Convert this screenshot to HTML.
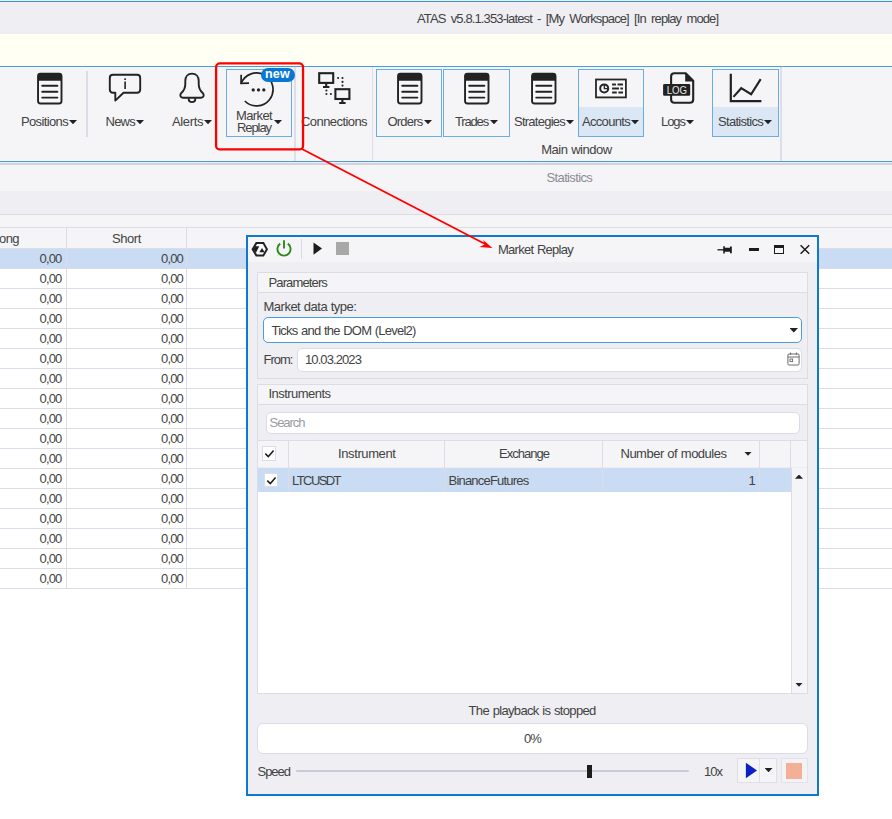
<!DOCTYPE html>
<html><head><meta charset="utf-8"><title>ATAS Market Replay</title>
<style>
*{box-sizing:border-box;margin:0;padding:0}
html,body{width:892px;height:819px;overflow:hidden;background:#fff}
body{position:relative;font-family:"Liberation Sans",sans-serif;font-size:13px;color:#424242;-webkit-font-smoothing:antialiased}
.abs{position:absolute}
.t{position:absolute;white-space:nowrap;line-height:16px;height:16px}
.hl{position:absolute;height:1px}
.vl{position:absolute;width:1px}
.box{position:absolute;border:1px solid #6aade3}
.arr{position:absolute;width:8px;height:4.2px;background:#222;clip-path:polygon(0 0,100% 0,50% 100%)}
</style></head><body>

<!-- main title bar -->
<div class="abs" style="left:0;top:0;width:892px;height:34px;background:#eeeef3"></div>
<div class="hl" style="left:0;top:1px;width:892px;background:#3b93d6"></div>
<div class="t" id="title" style="letter-spacing:-0.88px;word-spacing:2.48px;left:417px;top:11px">ATAS v5.8.1.353-latest - [My Workspace] [In replay mode]</div>

<!-- yellow strip -->
<div class="abs" style="left:0;top:34px;width:892px;height:32px;background:#fffff4"></div>

<!-- ribbon -->
<div class="abs" id="ribbon" style="left:0;top:66px;width:892px;height:97px;background:#f5f5f7"></div>
<div class="hl" style="left:0;top:66px;width:892px;background:#4a9cdb"></div>
<div class="hl" style="left:0;top:161px;width:892px;background:#4a9cdb"></div>
<div class="hl" style="left:0;top:162px;width:892px;height:1px;background:#eeeef4"></div>


<!-- ribbon separators -->
<div class="vl" style="left:86.3px;top:71px;height:66px;width:1.3px;background:#dcdce6"></div>
<div class="vl" style="left:294.3px;top:67px;height:94px;width:1.3px;background:#dedee8"></div>
<div class="vl" style="left:371.8px;top:67px;height:94px;width:1.3px;background:#dedee8"></div>
<div class="vl" style="left:780.4px;top:67px;height:94px;width:1.3px;background:#dedee8"></div>

<!-- button boxes -->
<div class="box" style="left:226px;top:69px;width:66px;height:68px"></div>
<div class="box" style="left:376px;top:69px;width:66px;height:68px"></div>
<div class="box" style="left:443px;top:69px;width:67px;height:68px"></div>
<div class="box" style="left:578px;top:69px;width:66px;height:68px"><div class="abs" style="left:0;top:37px;width:64px;height:29px;background:#dbe7f5"></div></div>
<div class="box" style="left:712px;top:69px;width:67px;height:68px"><div class="abs" style="left:0;top:37px;width:65px;height:29px;background:#dbe7f5"></div></div>

<!-- list icons: Positions, Orders, Trades, Strategies -->
<svg class="abs" style="left:37px;top:72px" width="26" height="33" viewBox="0 0 26 33"><rect x="0.1" y="0.8" width="25.35" height="31.6" rx="3.4" fill="#222"/><path d="M2 8.85 H23.55 V28.9 Q23.55 30.5 21.95 30.5 H3.6 Q2 30.5 2 28.9Z" fill="#f7f7f9"/><path d="M5.2 13.7H20.4M5.2 19.7H20.4M5.2 25.6H20.4" stroke="#222" stroke-width="1.9" stroke-linecap="round"/></svg>
<svg class="abs" style="left:397px;top:72px" width="26" height="33" viewBox="0 0 26 33"><rect x="0.1" y="0.8" width="25.35" height="31.6" rx="3.4" fill="#222"/><path d="M2 8.85 H23.55 V28.9 Q23.55 30.5 21.95 30.5 H3.6 Q2 30.5 2 28.9Z" fill="#f7f7f9"/><path d="M5.2 13.7H20.4M5.2 19.7H20.4M5.2 25.6H20.4" stroke="#222" stroke-width="1.9" stroke-linecap="round"/></svg>
<svg class="abs" style="left:464px;top:72px" width="26" height="33" viewBox="0 0 26 33"><rect x="0.1" y="0.8" width="25.35" height="31.6" rx="3.4" fill="#222"/><path d="M2 8.85 H23.55 V28.9 Q23.55 30.5 21.95 30.5 H3.6 Q2 30.5 2 28.9Z" fill="#f7f7f9"/><path d="M5.2 13.7H20.4M5.2 19.7H20.4M5.2 25.6H20.4" stroke="#222" stroke-width="1.9" stroke-linecap="round"/></svg>
<svg class="abs" style="left:531px;top:72px" width="26" height="33" viewBox="0 0 26 33"><rect x="0.1" y="0.8" width="25.35" height="31.6" rx="3.4" fill="#222"/><path d="M2 8.85 H23.55 V28.9 Q23.55 30.5 21.95 30.5 H3.6 Q2 30.5 2 28.9Z" fill="#f7f7f9"/><path d="M5.2 13.7H20.4M5.2 19.7H20.4M5.2 25.6H20.4" stroke="#222" stroke-width="1.9" stroke-linecap="round"/></svg>


<!-- News icon -->
<svg class="abs" style="left:107px;top:72px" width="36" height="32" viewBox="0 0 36 32"><path d="M6 2.8 H30 Q33.2 2.8 33.2 6 V17.6 Q33.2 20.8 30 20.8 H16.5 L8.3 28.6 V20.8 H6 Q2.8 20.8 2.8 17.6 V6 Q2.8 2.8 6 2.8Z" fill="none" stroke="#222" stroke-width="1.9" stroke-linejoin="round"/><rect x="17.3" y="9.5" width="1.6" height="7.5" fill="#222"/><rect x="17.3" y="6.3" width="1.6" height="1.7" fill="#222"/></svg>

<!-- Alerts icon -->
<svg class="abs" style="left:178px;top:71px" width="28" height="34" viewBox="0 0 28 34"><path d="M14 2.6 C10 2.6 7.3 5.6 7.3 10 V13 C7.3 17.5 5.6 20 3.3 22 C1.5 23.8 2.2 26.7 5 26.7 H23 C25.8 26.7 26.5 23.8 24.7 22 C22.4 20 20.7 17.5 20.7 13 V10 C20.7 5.6 18 2.6 14 2.6Z" fill="none" stroke="#222" stroke-width="1.9"/><path d="M10.6 27.4 C10.8 32.4 17.2 32.4 17.4 27.4" fill="none" stroke="#222" stroke-width="1.9"/></svg>

<!-- Market replay icon -->
<svg class="abs" style="left:236px;top:68px" width="42" height="42" viewBox="0 0 42 42"><path d="M5.2 15.3 A16.5 16.5 0 1 1 8.8 33" fill="none" stroke="#222" stroke-width="1.7"/><path d="M5.2 6.8 L5 15.4 L13 15.2" fill="none" stroke="#222" stroke-width="1.7"/><circle cx="17.2" cy="21.9" r="1.65" fill="#222"/><circle cx="22.5" cy="21.9" r="1.65" fill="#222"/><circle cx="27.8" cy="21.9" r="1.65" fill="#222"/></svg>
<div class="abs" style="left:260.5px;top:68.2px;width:34px;height:13.4px;border-radius:7px;background:#0a78d2;color:#fff;font-weight:bold;font-size:12.5px;line-height:13.4px;text-align:center;letter-spacing:0.2px">new</div>

<!-- Connections icon -->
<svg class="abs" style="left:317px;top:71px" width="35" height="34" viewBox="0 0 35 34"><g fill="none" stroke="#222" stroke-width="2.1"><rect x="2.2" y="2.2" width="14" height="9.7"/><path d="M9.2 11.9V15.6M6 16H12.4"/><rect x="18.4" y="18.2" width="14" height="9.8"/><path d="M25.4 28V31.6M22.2 32H28.6"/></g><g fill="#222"><circle cx="21.1" cy="7" r="1.05"/><circle cx="25.5" cy="7" r="1.05"/><circle cx="25.5" cy="10.9" r="1.05"/><circle cx="25.5" cy="14.6" r="1.05"/><circle cx="9.4" cy="19.5" r="1.05"/><circle cx="9.4" cy="23" r="1.05"/><circle cx="13.9" cy="23" r="1.05"/></g></svg>

<!-- Accounts icon -->
<svg class="abs" style="left:595px;top:78px" width="33" height="21" viewBox="0 0 33 21"><rect x="1" y="1.5" width="29.9" height="17.9" fill="#f8f8fa" stroke="#262626" stroke-width="1.8"/><circle cx="9.2" cy="10.4" r="4" fill="none" stroke="#262626" stroke-width="2"/><path d="M9.4 7V10.6H13" fill="none" stroke="#262626" stroke-width="1.4"/><path d="M17.1 6.4H20.9M22.5 6.4H28M17.1 10.4H24M25.4 10.4H28M17.1 14.6H21.8M23.4 14.6H28" stroke="#262626" stroke-width="2"/></svg>

<!-- Logs icon -->
<svg class="abs" style="left:662px;top:71px" width="34" height="34" viewBox="0 0 34 34"><path d="M12.4 2.2 H23.7 L31.2 9.7 V28.5 Q31.2 31.8 27.9 31.8 H12.4 Q9.1 31.8 9.1 28.5 V5.5 Q9.1 2.2 12.4 2.2Z" fill="none" stroke="#222" stroke-width="2.1" stroke-linejoin="round"/><path d="M23.2 2.2 L31.4 10.4 H23.2Z" fill="#222"/><rect x="1.1" y="12.9" width="27.1" height="11.9" rx="1.4" fill="#222"/><text x="14.9" y="22.9" font-family="Liberation Sans, sans-serif" font-size="10.6" fill="#e6e6e6" text-anchor="middle" textLength="20.4" lengthAdjust="spacingAndGlyphs">LOG</text></svg>

<!-- Statistics icon -->
<svg class="abs" style="left:729px;top:72px" width="34" height="32" viewBox="0 0 34 32"><path d="M1.8 1.7 V29.15 H32.4" fill="none" stroke="#222" stroke-width="2.2"/><path d="M4.45 24.9 L12.2 16.2 L22.1 22.2 L31.7 7.1" fill="none" stroke="#222" stroke-width="2.1" stroke-linejoin="miter"/></svg>

<!-- ribbon labels -->
<div class="t rl" style="letter-spacing:-0.64px;left:21px;top:114px">Positions</div><div class="arr" style="left:69px;top:120px"></div>
<div class="t rl" style="letter-spacing:-0.75px;left:105.5px;top:114px">News</div><div class="arr" style="left:136px;top:120px"></div>
<div class="t rl" style="letter-spacing:-0.37px;left:172px;top:114px">Alerts</div><div class="arr" style="left:204px;top:120px"></div>
<div class="t rl" style="letter-spacing:-0.62px;left:236px;top:108px">Market</div>
<div class="t rl" style="letter-spacing:-1.08px;left:237px;top:120px">Replay</div><div class="arr" style="left:274px;top:120px"></div>
<div class="t rl" style="letter-spacing:-0.57px;left:301px;top:114px">Connections</div>
<div class="t rl" style="letter-spacing:-0.79px;left:387.5px;top:114px">Orders</div><div class="arr" style="left:424px;top:120px"></div>
<div class="t rl" style="letter-spacing:-1.16px;left:455px;top:114px">Trades</div><div class="arr" style="left:490px;top:120px"></div>
<div class="t rl" style="letter-spacing:-0.75px;left:514px;top:114px">Strategies</div><div class="arr" style="left:566px;top:120px"></div>
<div class="t rl" style="letter-spacing:-0.69px;left:582px;top:114px">Accounts</div><div class="arr" style="left:631px;top:120px"></div>
<div class="t rl" style="letter-spacing:-1.05px;left:661px;top:114px">Logs</div><div class="arr" style="left:686px;top:120px"></div>
<div class="t rl" style="letter-spacing:-0.70px;left:718px;top:114px">Statistics</div><div class="arr" style="left:764px;top:120px"></div>
<div class="t" style="letter-spacing:-0.46px;word-spacing:0.46px;left:541.2px;top:142px">Main window</div>

<!-- below ribbon -->
<div class="abs" style="left:0;top:164px;width:892px;height:27px;background:#f5f5f7"></div>
<div class="hl" style="left:0;top:162.8px;width:892px;height:1.8px;background:#d3d3df"></div>
<div class="abs" style="left:0;top:191px;width:892px;height:23px;background:#eeeef3"></div>
<div class="hl" style="left:0;top:214px;width:892px;background:#dcdce5"></div>
<div class="abs" style="left:0;top:215px;width:892px;height:12px;background:#f5f5f7"></div>
<div class="hl" style="left:0;top:227px;width:892px;background:#dcdce5"></div>

<div class="t" style="letter-spacing:-0.65px;left:546.6px;top:170px;color:#8b8b95">Statistics</div>

<!-- statistics table -->
<div class="abs" style="left:0;top:228px;width:892px;height:20px;background:#f5f5f7"></div>
<div class="abs" style="left:0;top:248px;width:892px;height:341px;background:#fff;background-image:linear-gradient(#dcdce8,#dcdce8);background-size:100% 1px;background-repeat:no-repeat"></div>
<div class="abs" style="left:0;top:249px;width:892px;height:19px;background:#c9dcf4"></div>
<div class="abs" id="rows" style="left:0;top:248px;width:892px;height:341px;background:repeating-linear-gradient(to bottom,#dcdce8 0,#dcdce8 1px,transparent 1px,transparent 20px)"></div>
<div class="vl" style="left:66px;top:228px;height:361px;background:#dcdce8"></div>
<div class="vl" style="left:186px;top:228px;height:361px;background:#dcdce8"></div>
<div class="t" style="letter-spacing:-0.57px;left:-1px;top:231px">ong</div>
<div class="t" style="letter-spacing:-0.42px;left:112px;top:231px">Short</div>
<div class="t" style="letter-spacing:-0.83px;left:39.5px;top:251px">0,00</div><div class="t" style="letter-spacing:-0.83px;left:161px;top:251px">0,00</div>
<div class="t" style="letter-spacing:-0.83px;left:39.5px;top:271px">0,00</div><div class="t" style="letter-spacing:-0.83px;left:161px;top:271px">0,00</div>
<div class="t" style="letter-spacing:-0.83px;left:39.5px;top:291px">0,00</div><div class="t" style="letter-spacing:-0.83px;left:161px;top:291px">0,00</div>
<div class="t" style="letter-spacing:-0.83px;left:39.5px;top:311px">0,00</div><div class="t" style="letter-spacing:-0.83px;left:161px;top:311px">0,00</div>
<div class="t" style="letter-spacing:-0.83px;left:39.5px;top:331px">0,00</div><div class="t" style="letter-spacing:-0.83px;left:161px;top:331px">0,00</div>
<div class="t" style="letter-spacing:-0.83px;left:39.5px;top:351px">0,00</div><div class="t" style="letter-spacing:-0.83px;left:161px;top:351px">0,00</div>
<div class="t" style="letter-spacing:-0.83px;left:39.5px;top:371px">0,00</div><div class="t" style="letter-spacing:-0.83px;left:161px;top:371px">0,00</div>
<div class="t" style="letter-spacing:-0.83px;left:39.5px;top:391px">0,00</div><div class="t" style="letter-spacing:-0.83px;left:161px;top:391px">0,00</div>
<div class="t" style="letter-spacing:-0.83px;left:39.5px;top:411px">0,00</div><div class="t" style="letter-spacing:-0.83px;left:161px;top:411px">0,00</div>
<div class="t" style="letter-spacing:-0.83px;left:39.5px;top:431px">0,00</div><div class="t" style="letter-spacing:-0.83px;left:161px;top:431px">0,00</div>
<div class="t" style="letter-spacing:-0.83px;left:39.5px;top:451px">0,00</div><div class="t" style="letter-spacing:-0.83px;left:161px;top:451px">0,00</div>
<div class="t" style="letter-spacing:-0.83px;left:39.5px;top:471px">0,00</div><div class="t" style="letter-spacing:-0.83px;left:161px;top:471px">0,00</div>
<div class="t" style="letter-spacing:-0.83px;left:39.5px;top:491px">0,00</div><div class="t" style="letter-spacing:-0.83px;left:161px;top:491px">0,00</div>
<div class="t" style="letter-spacing:-0.83px;left:39.5px;top:511px">0,00</div><div class="t" style="letter-spacing:-0.83px;left:161px;top:511px">0,00</div>
<div class="t" style="letter-spacing:-0.83px;left:39.5px;top:531px">0,00</div><div class="t" style="letter-spacing:-0.83px;left:161px;top:531px">0,00</div>
<div class="t" style="letter-spacing:-0.83px;left:39.5px;top:551px">0,00</div><div class="t" style="letter-spacing:-0.83px;left:161px;top:551px">0,00</div>
<div class="t" style="letter-spacing:-0.83px;left:39.5px;top:571px">0,00</div><div class="t" style="letter-spacing:-0.83px;left:161px;top:571px">0,00</div>

<!-- Market Replay dialog -->
<div class="abs" id="dlg" style="left:246px;top:235px;width:573px;height:561px;border:2px solid #0f78cf;background:#eeeef3"></div>
<div class="abs" style="left:248px;top:237px;width:569px;height:25px;background:#f5f5f7"></div>

<!-- dialog toolbar icons -->
<svg class="abs" style="left:251px;top:241px" width="18" height="17" viewBox="0 0 18 17"><path d="M4.8 1.04 H12.9 L17.04 8.3 L12.9 15.56 H4.8 L0.5 8.3Z" fill="#222"/><path d="M6 3.1 H11.8 L14.8 8.3 L11.8 13.4 H6 L2.9 8.3Z" fill="#fbfbfc"/><path d="M2.6 8.3 L4.2 5.3 H8.3 L4.9 11.8Z" fill="#1c1c1c"/><path d="M11 7.1 L13.7 11.2 H8.3Z" fill="#1c1c1c"/></svg>
<svg class="abs" style="left:275px;top:239px" width="18" height="19" viewBox="0 0 18 19"><path d="M5.2 4.6 A6.6 6.6 0 1 0 12.8 4.6" fill="none" stroke="#2c8a1c" stroke-width="1.9"/><path d="M9 1.2 V9.6" stroke="#2c8a1c" stroke-width="1.9"/></svg>
<div class="vl" style="left:301px;top:239px;height:20px;background:#d9d9e3"></div>
<svg class="abs" style="left:313px;top:242px" width="10" height="14" viewBox="0 0 10 14"><path d="M0.5 0.5 L9 6.6 L0.5 12.8Z" fill="#1c1c1c"/></svg>
<div class="abs" style="left:336.3px;top:242.3px;width:12.9px;height:12.8px;background:#a8a8a8"></div>
<div class="t" style="letter-spacing:-0.73px;word-spacing:0.73px;left:498px;top:242px">Market Replay</div>

<!-- window buttons -->
<svg class="abs" style="left:716px;top:243px" width="18" height="14" viewBox="0 0 18 14"><path d="M1.5 6.8 H8" stroke="#1c1c1c" stroke-width="1.3"/><path d="M8 3.2 V10.4" stroke="#1c1c1c" stroke-width="1.6"/><path d="M8 4.8 H14 V3.4 H15.8 V10.2 H14 V8.8 H8Z" fill="#1c1c1c"/></svg>
<div class="abs" style="left:748.5px;top:247.5px;width:10px;height:3.6px;background:#1c1c1c"></div>
<div class="abs" style="left:774px;top:244.5px;width:10px;height:9.5px;border:1px solid #1c1c1c;border-top-width:3px"></div>
<svg class="abs" style="left:800px;top:244px" width="10" height="11" viewBox="0 0 10 11"><path d="M0.6 1.2 L9.2 9.7 M9.2 1.2 L0.6 9.7" stroke="#1c1c1c" stroke-width="1.5"/></svg>

<!-- Parameters group -->
<div class="abs" style="left:257px;top:272px;width:551px;height:107px;border:1px solid #dcdce6"></div>
<div class="abs" style="left:258px;top:273px;width:549px;height:20px;background:#f5f5f7;border-bottom:1px solid #dcdce6"></div>
<div class="t" style="letter-spacing:-0.87px;left:268.5px;top:275px">Parameters</div>
<div class="t" style="letter-spacing:-0.50px;word-spacing:0.50px;left:263.5px;top:299px">Market data type:</div>
<div class="abs" style="left:262.5px;top:317px;width:539.5px;height:26px;border:1px solid #4a9cdb;border-radius:5px;background:#fff"></div>
<div class="t" style="letter-spacing:-0.79px;word-spacing:0.79px;left:271.5px;top:323px">Ticks and the DOM (Level2)</div>
<div class="arr" style="left:789.5px;top:328px;width:8.5px;height:4.5px"></div>
<div class="t" style="letter-spacing:-0.99px;left:263.5px;top:352px">From:</div>
<div class="abs" style="left:297px;top:347.5px;width:505px;height:24.5px;border:1px solid #d9dce8;border-radius:5px;background:#fff"></div>
<div class="t" style="letter-spacing:-0.91px;left:305px;top:352px">10.03.2023</div>
<svg class="abs" style="left:787px;top:352px" width="13" height="14" viewBox="0 0 13 14"><rect x="0.9" y="2" width="11.2" height="11" rx="1.2" fill="none" stroke="#6a6a6a" stroke-width="1"/><path d="M0.9 5 H12.1" stroke="#6a6a6a" stroke-width="1"/><path d="M3.6 0.5 V3 M9.4 0.5 V3" stroke="#6a6a6a" stroke-width="1"/><rect x="3" y="7" width="2.6" height="2.6" fill="none" stroke="#6a6a6a" stroke-width="0.9"/></svg>

<!-- Instruments group -->
<div class="abs" style="left:257px;top:383.5px;width:551px;height:310px;border:1px solid #dcdce6"></div>
<div class="abs" style="left:258px;top:384.5px;width:549px;height:20.5px;background:#f5f5f7;border-bottom:1px solid #dcdce6"></div>
<div class="t" style="letter-spacing:-0.54px;left:268.5px;top:386px">Instruments</div>
<div class="abs" style="left:265.5px;top:411.5px;width:534.5px;height:22px;border:1px solid #d9dce8;border-radius:5px;background:#fff"></div>
<div class="t" style="letter-spacing:-1.03px;left:269.5px;top:415px;color:#9a9a9f">Search</div>

<!-- instruments grid -->
<div class="abs" style="left:258px;top:440px;width:549px;height:28px;background:#f5f5f7;border-top:1px solid #dcdce6;border-bottom:1px solid #ececf2"></div>
<div class="abs" style="left:258px;top:468px;width:533px;height:225px;background:#fff"></div>
<div class="abs" style="left:258px;top:468px;width:533px;height:23.5px;background:#c9dcf4"></div>
<div class="abs" style="left:791px;top:468px;width:16px;height:225px;background:#f5f5f7;border-left:1px solid #dcdce6"></div>
<div class="vl" style="left:287.7px;top:441px;height:50px;background:#dcdce6"></div>
<div class="vl" style="left:444px;top:441px;height:50px;background:#dcdce6"></div>
<div class="vl" style="left:602px;top:441px;height:50px;background:#dcdce6"></div>
<div class="vl" style="left:759px;top:441px;height:50px;background:#dcdce6"></div>
<div class="vl" style="left:790px;top:441px;height:27px;background:#dcdce6"></div>
<div class="abs" style="left:262px;top:446px;width:14px;height:14.5px;border:1px solid #dcdce6;background:#fff"></div>
<svg class="abs" style="left:264px;top:448px" width="11" height="11" viewBox="0 0 11 11"><path d="M1.3 5.6 L4.3 8.6 L9.6 2.4" fill="none" stroke="#1c1c1c" stroke-width="1.5"/></svg>
<div class="abs" style="left:263.6px;top:473px;width:14px;height:13.5px;border:1px solid #dcdce6;background:#fff"></div>
<svg class="abs" style="left:265.5px;top:474.5px" width="11" height="11" viewBox="0 0 11 11"><path d="M1.3 5.6 L4.3 8.6 L9.6 2.4" fill="none" stroke="#1c1c1c" stroke-width="1.5"/></svg>
<div class="t" style="letter-spacing:-0.39px;left:338px;top:446px">Instrument</div>
<div class="t" style="letter-spacing:-0.98px;left:499px;top:446px">Exchange</div>
<div class="t" style="letter-spacing:-0.50px;word-spacing:0.50px;left:620.5px;top:446px">Number of modules</div>
<div class="arr" style="left:744px;top:451.5px;width:8px;height:4.2px"></div>
<div class="t" style="letter-spacing:-1.57px;left:292px;top:473px">LTCUSDT</div>
<div class="t" style="letter-spacing:-0.79px;left:448.5px;top:473px">BinanceFutures</div>
<div class="t" style="left:748.5px;top:473px">1</div>
<div class="arr" style="left:795px;top:474.5px;width:8px;height:4.2px;clip-path:polygon(0 100%,100% 100%,50% 0)"></div>
<div class="arr" style="left:795px;top:682.5px;width:8px;height:4.2px"></div>

<!-- playback status -->
<div class="t" style="letter-spacing:-0.66px;word-spacing:0.66px;left:468.6px;top:703px">The playback is stopped</div>
<div class="abs" style="left:257px;top:723px;width:551px;height:30.5px;border:1px solid #d9dce8;border-radius:6px;background:#fff"></div>
<div class="t" style="letter-spacing:-0.90px;left:524px;top:731px">0%</div>
<div class="t" style="letter-spacing:-1.02px;left:257.5px;top:763.5px">Speed</div>
<div class="abs" style="left:296px;top:770px;width:393px;height:2px;background:#c9cbdb;border-radius:1px"></div>
<div class="abs" style="left:587px;top:765px;width:5px;height:12.5px;background:#1c1c1c"></div>
<div class="t" style="letter-spacing:-0.99px;left:704px;top:763.5px">10x</div>
<div class="abs" style="left:736.5px;top:757.5px;width:40.5px;height:25.5px;border:1px solid #dedee8;background:#f5f5f7"></div>
<div class="vl" style="left:759px;top:758px;height:25px;background:#dedee8"></div>
<svg class="abs" style="left:745px;top:762px" width="13" height="17" viewBox="0 0 13 17"><path d="M0.9 0.8 L12 8.5 L0.9 16.3Z" fill="#0b20c6"/></svg>
<div class="arr" style="left:764.5px;top:768px;width:8px;height:4.2px"></div>
<div class="abs" style="left:781px;top:757.5px;width:26.5px;height:25.5px;border:1px solid #e2e2ea;background:#f3f3f6"></div>
<div class="abs" style="left:786px;top:763px;width:16.2px;height:15.7px;background:#f3b097"></div>

<!-- red callout -->
<svg class="abs" style="left:210px;top:58px" width="100" height="98" viewBox="0 0 100 98"><rect x="6.1" y="5.45" width="86.95" height="86" rx="3.8" fill="none" stroke="#ff0000" stroke-width="2.3"/></svg>
<svg class="abs" style="left:296px;top:143px" width="200" height="110" viewBox="0 0 200 110"><path d="M5 5.5 L191 102" stroke="#ff0000" stroke-width="1.9" fill="none"/><path d="M196.4 104.9 L183.4 103.9 L188.8 101.4 L187.2 97.0Z" fill="#ff0000"/></svg>

</body></html>
